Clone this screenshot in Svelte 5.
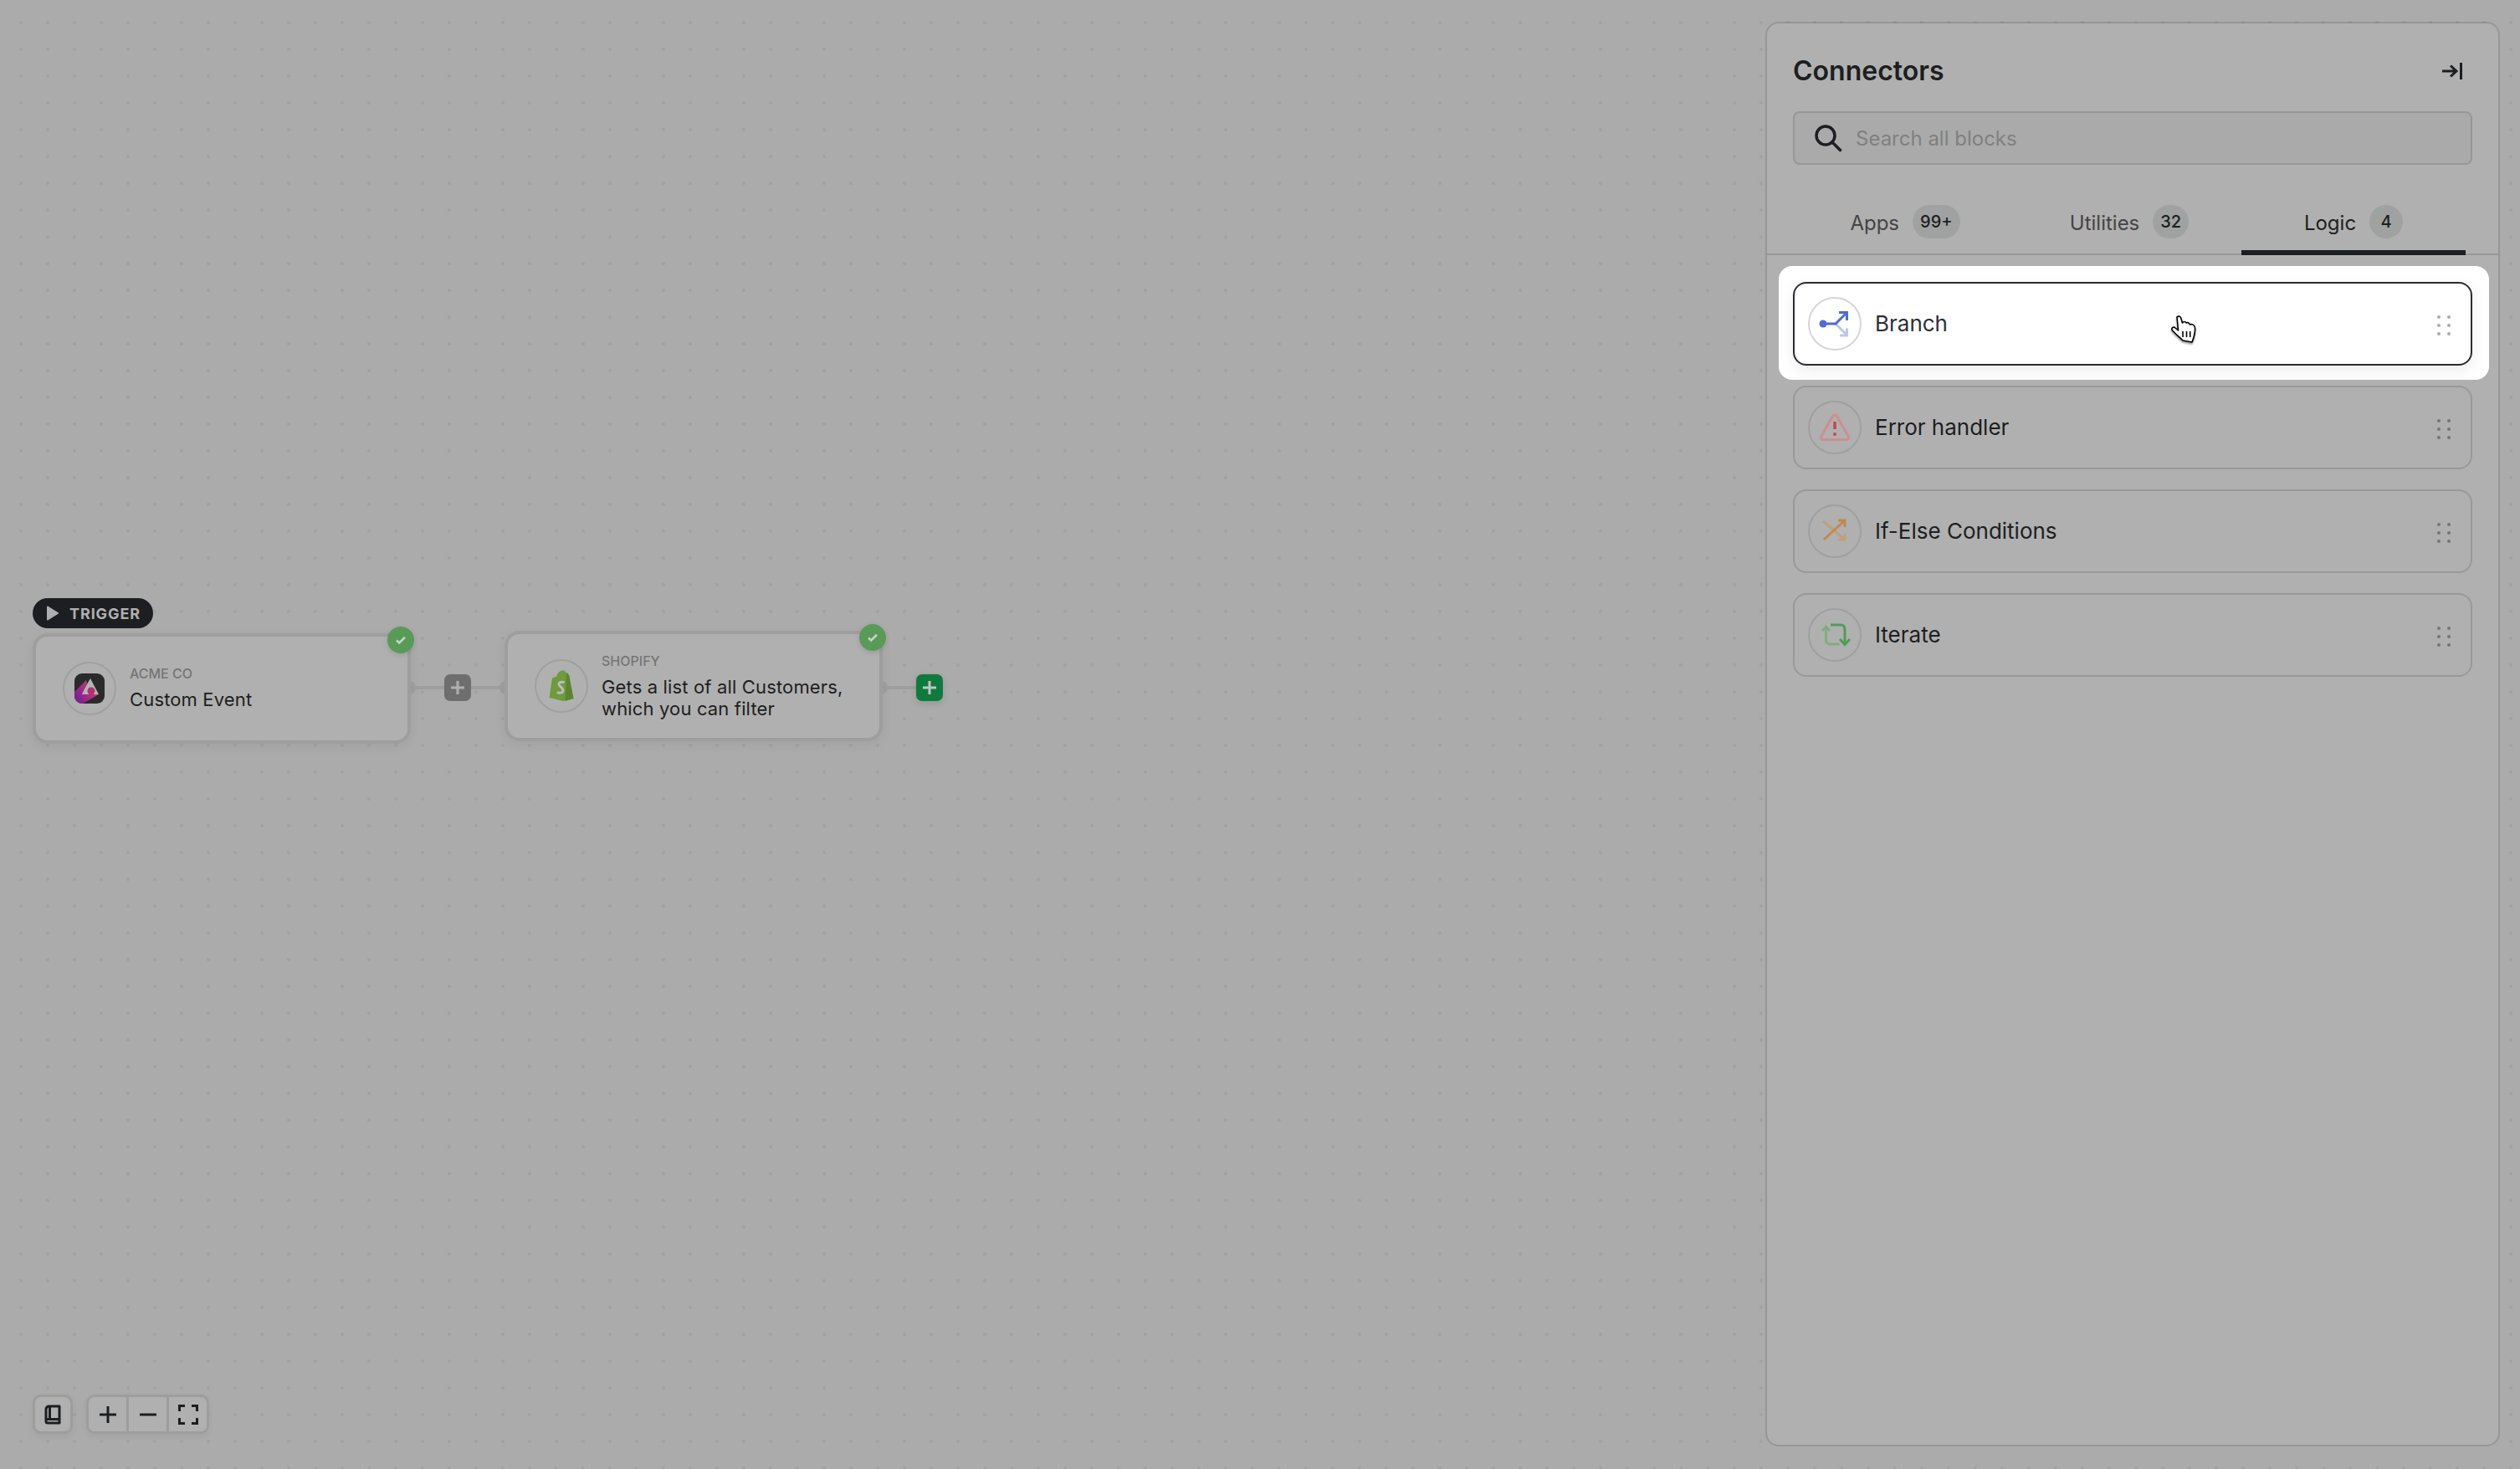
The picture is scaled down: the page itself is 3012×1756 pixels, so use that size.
<script>
	const tabs = [
		{ name: 'Apps', count: '99+' },
		{ name: 'Utilities', count: '32' },
		{ name: 'Logic', count: '4', active: true }
	];

	const blocks = [
		{ id: 'branch', label: 'Branch', active: true },
		{ id: 'error', label: 'Error handler' },
		{ id: 'ifelse', label: 'If-Else Conditions' },
		{ id: 'iterate', label: 'Iterate' }
	];
</script>

<div class="canvas">
	<div class="pill">
		<svg width="16" height="20" viewBox="0 0 16 20"><path d="M2 2.500v15l12-7.500z" fill="#b0b0b0" stroke="#b0b0b0" stroke-width="2" stroke-linejoin="round" /></svg>
		<span>TRIGGER</span>
	</div>

	<div class="wire wire-a"></div>
	<div class="wire wire-b"></div>
	<div class="wire wire-c"></div>

	<div class="node node-a">
		<span class="check">
			<svg width="16" height="16" viewBox="0 0 16 16"><path d="M3 8.500l3.200 3L13 4.800" fill="none" stroke="#c4d6c3" stroke-width="2.600" /></svg>
		</span>
		<span class="logo">
			<svg width="36" height="36" viewBox="0 0 36 36">
				<defs>
					<linearGradient id="acme" x1="0" y1="1" x2="1" y2="0.4">
						<stop offset="0" stop-color="#6a1b92" />
						<stop offset="0.5" stop-color="#a12a8a" />
						<stop offset="1" stop-color="#c9425f" />
					</linearGradient>
					<clipPath id="acme-clip"><rect width="36" height="36" rx="9" /></clipPath>
				</defs>
				<g clip-path="url(#acme-clip)">
					<rect width="36" height="36" fill="#2a2a2a" />
					<path d="M19 6L29 25H8z" fill="#b4b4b4" />
					<path d="M14 8L0 22v14h10l19-11H9l6-13z" fill="url(#acme)" />
					<circle cx="20" cy="21" r="4.500" fill="#b4306e" />
				</g>
			</svg>
		</span>
		<div class="copy">
			<span class="vendor">ACME CO</span>
			<span class="title">Custom Event</span>
		</div>
	</div>

	<button class="add add-grey" aria-label="Add step">
		<svg width="20" height="20" viewBox="0 0 20 20"><path d="M10 2v16M2 10h16" stroke="#b0b0b0" stroke-width="3" /></svg>
	</button>

	<div class="node node-b">
		<span class="check">
			<svg width="16" height="16" viewBox="0 0 16 16"><path d="M3 8.500l3.200 3L13 4.800" fill="none" stroke="#c4d6c3" stroke-width="2.600" /></svg>
		</span>
		<span class="logo">
			<svg width="30" height="38" viewBox="0 0 30 38">
				<path d="M0.500 33L4 9.500l6-2C11 3 14 0.500 17 0.500c2 0 3 1 3.500 2.500l2 .5L29.500 34 17 37z" fill="#6f9a3e" />
				<path d="M21 4l2 .3 1.500 3 5 26.700-10 3z" fill="#5b8530" />
				<path d="M10 8c.5-3 3-6 6-6 3 0 4 3 4 6" fill="none" stroke="#6f9a3e" stroke-width="1.800" />
				<path d="M18.500 15c-3-1.500-6.500-.5-6.500 2 0 3 5 3.500 5 7 0 3.500-4 4-7 2.500" fill="none" stroke="#bcbcbc" stroke-width="3" />
			</svg>
		</span>
		<div class="copy">
			<span class="vendor">SHOPIFY</span>
			<span class="title">Gets a list of all Customers,<br />which you can filter</span>
		</div>
	</div>

	<button class="add add-green" aria-label="Add step">
		<svg width="20" height="20" viewBox="0 0 20 20"><path d="M10 2v16M2 10h16" stroke="#bcc7bf" stroke-width="3" /></svg>
	</button>

	<div class="zoom-bar">
		<button class="tool solo" aria-label="Guide">
			<svg width="20" height="24" viewBox="0 0 20 24" fill="none" stroke="#1d1e21" stroke-width="3">
				<path d="M18 2H6C3.500 2 2 3.500 2 6v14c0 1.200.8 2 2 2h14zM2 17.500h16M6.500 2v15" stroke-linejoin="round" />
			</svg>
		</button>
		<div class="tool-group">
			<button class="tool" aria-label="Zoom in">
				<svg width="20" height="20" viewBox="0 0 20 20"><path d="M1 10h18M10 1v18" stroke="#1d1e21" stroke-width="3" stroke-linecap="round" /></svg>
			</button>
			<button class="tool" aria-label="Zoom out">
				<svg width="20" height="20" viewBox="0 0 20 20"><path d="M1 10h18" stroke="#1d1e21" stroke-width="3" stroke-linecap="round" /></svg>
			</button>
			<button class="tool" aria-label="Fit view">
				<svg width="24" height="24" viewBox="0 0 24 24" fill="none" stroke="#1d1e21" stroke-width="3">
					<path d="M1.500 8V1.500H8M16 1.500h6.500V8M22.500 16v6.500H16M8 22.500H1.500V16" />
				</svg>
			</button>
		</div>
	</div>

	<aside class="panel">
		<header class="panel-head">
			<h2>Connectors</h2>
			<svg width="26" height="22" viewBox="0 0 26 22" fill="none" stroke="#1d1e21" stroke-width="3">
				<path d="M1 11h17M11 4.500l7 6.500-7 6.500" />
				<path d="M23.500 1v20" />
			</svg>
		</header>

		<div class="search">
			<svg width="34" height="34" viewBox="0 0 34 34" fill="none" stroke="#1d1e21" stroke-width="3.500">
				<circle cx="14" cy="14" r="11" />
				<path d="M22 22l9.500 9.500" stroke-linecap="round" />
			</svg>
			<span>Search all blocks</span>
		</div>

		<nav class="tabs">
			{#each tabs as tab}
				<div class="tab" class:on={tab.active}>
					<span class="tab-name">{tab.name}</span>
					<span class="count">{tab.count}</span>
				</div>
			{/each}
		</nav>

		<div class="list">
			{#each blocks as block}
				<div class:spot={block.active}>
					<div class="row" class:selected={block.active}>
						<span class="badge">
							<svg width="64" height="64" viewBox="0 0 64 64" fill="none" stroke-width="3">
								{#if block.id === 'branch'}
									<path d="M33 32l13 13M38 46h8.500v-8.500" stroke="#bcc7ef" />
									<circle cx="18" cy="32" r="4.500" fill="#4f6bd8" />
									<path d="M18 32h15l13-13M37 18.500h9.500V28" stroke="#4f6bd8" />
								{:else if block.id === 'error'}
									<path d="M29.500 18.500L15.800 42.500c-1.200 2.200 0 4 2.200 4h28c2.200 0 3.400-1.800 2.200-4L34.500 18.500c-1.200-2-3.800-2-5 0z" stroke="#cc8f90" />
									<path d="M32 25v9" stroke="#c7474e" stroke-width="3.500" />
									<circle cx="32" cy="40" r="2" fill="#c7474e" />
								{:else if block.id === 'ifelse'}
									<path d="M18 20l26 22M36 42h8v-7.500" stroke="#bfa07f" />
									<path d="M19 42l25-23M36 19h8v8" stroke="#c08a4a" />
								{:else}
									<path d="M21.500 22v16c0 3 2 5 5 5h11M17 27l4.500-5 4.500 5" stroke="#82ac80" />
									<path d="M27 20h12c3.500 0 5 2 5 5.500V43M38 37l6 6.500 6-6.500" stroke="#4f9e55" />
								{/if}
							</svg>
						</span>
						<span class="label">{block.label}</span>
						<span class="grip">
							{#each Array(6) as _}
								<i></i>
							{/each}
						</span>
						{#if block.active}
							<svg class="hand" width="32" height="34" viewBox="-1 -1 32 34">
								<path d="M7 1C9-.5 11.500 0 12 3l1.500 5c1.500-2 3.500-2 4.500 0 1.500-1 3.500-.5 4.500 2 2-1 4.500 0 5.500 2 1.500 3 0 12-3 19l-11-2C10 25 5 21 1.500 17-.5 14 3 12 5 14l3.500 3z" fill="#fff" stroke="#000" stroke-width="1.600" stroke-linejoin="round" />
								<path d="M14 18v7M18.500 18v7M22.700 18v7" stroke="#000" stroke-width="1.600" />
							</svg>
						{/if}
					</div>
				</div>
			{/each}
		</div>
	</aside>
</div>

<style>
	:global(body) {
		margin: 0;
	}

	.canvas {
		position: relative;
		width: 100vw;
		height: 100vh;
		overflow: hidden;
		background-color: #ababab;
		background-image: radial-gradient(circle, #a2a2a2 1.8px, transparent 2.4px);
		background-size: 32px 32px;
		background-position: 9px 11px;
		font-family: Inter, 'Liberation Sans', sans-serif;
		color: #1d1e21;
	}

	button {
		padding: 0;
		border: 0;
		font: inherit;
		display: flex;
		align-items: center;
		justify-content: center;
	}

	/* nodes sit on a free canvas */
	.pill {
		position: absolute;
		left: 39px;
		top: 715px;
		width: 144px;
		height: 36px;
		box-sizing: border-box;
		padding-left: 16px;
		display: flex;
		align-items: center;
		gap: 12px;
		border-radius: 18px;
		background: #1d1e21;
		color: #b0b0b0;
		font-size: 18px;
		font-weight: 700;
		letter-spacing: 0.9px;
	}

	.node {
		position: absolute;
		width: 452px;
		box-sizing: border-box;
		display: flex;
		align-items: center;
		gap: 16px;
		padding-left: 32px;
		background: #b0b0b0;
		border: 4px solid #9e9e9e;
		border-radius: 18px;
		box-shadow: 0 4px 14px rgba(0, 0, 0, 0.05);
	}

	.node-a {
		left: 39px;
		top: 757px;
		height: 132px;
	}

	.node-a .copy {
		padding-bottom: 2px;
	}

	.node-b {
		left: 603px;
		top: 754px;
		height: 132px;
	}

	.check {
		position: absolute;
		top: -12px;
		right: -8px;
		width: 32px;
		height: 32px;
		border-radius: 50%;
		background: #599a58;
		display: flex;
		align-items: center;
		justify-content: center;
		box-shadow: 0 2px 6px rgba(0, 0, 0, 0.12);
	}

	.logo {
		width: 64px;
		height: 64px;
		flex: none;
		box-sizing: border-box;
		border: 2px solid #a0a0a0;
		border-radius: 50%;
		display: flex;
		align-items: center;
		justify-content: center;
	}

	.copy {
		display: flex;
		flex-direction: column;
		gap: 8px;
	}

	.vendor {
		font-size: 16px;
		line-height: 20px;
		font-weight: 500;
		color: #757575;
	}

	.title {
		font-size: 22px;
		line-height: 26px;
		letter-spacing: 0.15px;
	}

	.wire {
		position: absolute;
		top: 820px;
		height: 4px;
		background: #9e9e9e;
	}

	.wire-a {
		left: 491px;
		width: 40px;
	}

	.wire-b {
		left: 563px;
		width: 40px;
	}

	.wire-c {
		left: 1055px;
		width: 40px;
	}

	.wire::before {
		content: '';
		position: absolute;
		top: -6px;
		left: -10px;
		width: 16px;
		height: 16px;
		border-radius: 50%;
		background: #9e9e9e;
	}

	.wire-b::before {
		left: auto;
		right: -10px;
	}

	.add {
		position: absolute;
		width: 32px;
		height: 32px;
		border-radius: 7px;
	}

	.add-grey {
		left: 531px;
		top: 806px;
		background: #6e6e6e;
	}

	.add-green {
		left: 1095px;
		top: 806px;
		background: #107a3e;
		box-shadow: 0 3px 8px rgba(0, 0, 0, 0.12);
	}

	.zoom-bar {
		position: absolute;
		left: 39px;
		top: 1667px;
		display: flex;
		gap: 16px;
	}

	.tool {
		width: 45px;
		height: 41px;
		background: #b0b0b0;
	}

	.tool.solo {
		width: 48px;
		height: 47px;
		border: 3px solid #9d9d9d;
		border-radius: 10px;
		box-sizing: border-box;
		box-shadow: 0 3px 8px rgba(0, 0, 0, 0.05);
	}

	.tool-group {
		display: flex;
		border: 3px solid #9d9d9d;
		border-radius: 10px;
		overflow: hidden;
		box-shadow: 0 3px 8px rgba(0, 0, 0, 0.05);
	}

	.tool-group .tool + .tool {
		border-left: 3px solid #9d9d9d;
		box-sizing: content-box;
	}

	/* panel floats over the canvas */
	.panel {
		position: absolute;
		left: 2110px;
		top: 26px;
		width: 878px;
		height: 1703px;
		box-sizing: border-box;
		padding-top: 37px;
		background: #b0b0b0;
		background-clip: padding-box;
		border: 2px solid rgba(0, 0, 0, 0.12);
		border-radius: 16px;
	}

	.panel-head {
		display: flex;
		align-items: center;
		justify-content: space-between;
		height: 40px;
		padding: 0 42px 0 31px;
		margin-bottom: 28px;
	}

	h2 {
		margin: 0;
		padding-bottom: 2px;
		font-size: 32px;
		font-weight: 600;
	}

	.search {
		margin: 0 31px;
		height: 64px;
		box-sizing: border-box;
		display: flex;
		align-items: center;
		gap: 16px;
		padding-left: 23px;
		background: #aaaaaa;
		border: 2px solid #979797;
		border-radius: 8px;
		font-size: 24px;
		color: #808080;
	}

	.tabs {
		display: grid;
		grid-template-columns: repeat(3, 268px);
		margin-top: 48px;
		padding-left: 31px;
		box-shadow: inset 0 -2px 0 #999999;
	}

	.tab {
		display: flex;
		align-items: center;
		justify-content: center;
		gap: 16px;
		height: 40px;
		padding-bottom: 14px;
		border-bottom: 6px solid transparent;
		font-size: 24px;
		color: #444444;
	}

	.tab-name {
		padding-top: 2px;
	}

	.tab.on {
		border-bottom-color: #1d1e21;
		color: #1d1e21;
	}

	.count {
		min-width: 40px;
		height: 40px;
		box-sizing: border-box;
		padding: 0 9px;
		border-radius: 20px;
		background: #a0a2a1;
		display: flex;
		align-items: center;
		justify-content: center;
		font-size: 20px;
		font-weight: 500;
		color: #1d1e21;
	}

	.list {
		display: flex;
		flex-direction: column;
		gap: 24px;
		padding: 32px 31px 0;
	}

	.row {
		position: relative;
		height: 100px;
		box-sizing: border-box;
		display: flex;
		align-items: center;
		gap: 16px;
		padding: 0 24px 0 16px;
		border: 2px solid #999999;
		border-radius: 16px;
	}

	.spot {
		position: relative;
		margin: -19px -20px -17px -17px;
		padding: 19px 20px 17px 17px;
		background: #ffffff;
		border-radius: 16px;
	}

	.row.selected {
		border-color: #2a2c30;
		background: #ffffff;
		box-shadow: 0 6px 18px rgba(0, 0, 0, 0.08);
	}

	.badge {
		position: relative;
		width: 64px;
		height: 64px;
		flex: none;
		box-sizing: border-box;
		border: 2px solid #9f9f9f;
		border-radius: 50%;
	}

	.selected .badge {
		border-color: #d6d6d6;
	}

	.badge svg {
		position: absolute;
		left: -2px;
		top: -2px;
	}

	.label {
		flex: 1;
		padding-bottom: 2px;
		font-size: 26px;
	}

	.selected .label {
		color: #2c2f36;
	}

	.grip {
		display: grid;
		grid-template-columns: 4px 4px;
		column-gap: 8px;
		row-gap: 6px;
		margin-top: 3px;
	}

	.grip i {
		width: 4px;
		height: 4px;
		border-radius: 50%;
		background: #757575;
	}

	.selected .grip i {
		background: #aaaaaa;
	}

	.hand {
		position: absolute;
		left: 449px;
		top: 38px;
		filter: drop-shadow(0 2px 1px rgba(0, 0, 0, 0.4));
	}
</style>
